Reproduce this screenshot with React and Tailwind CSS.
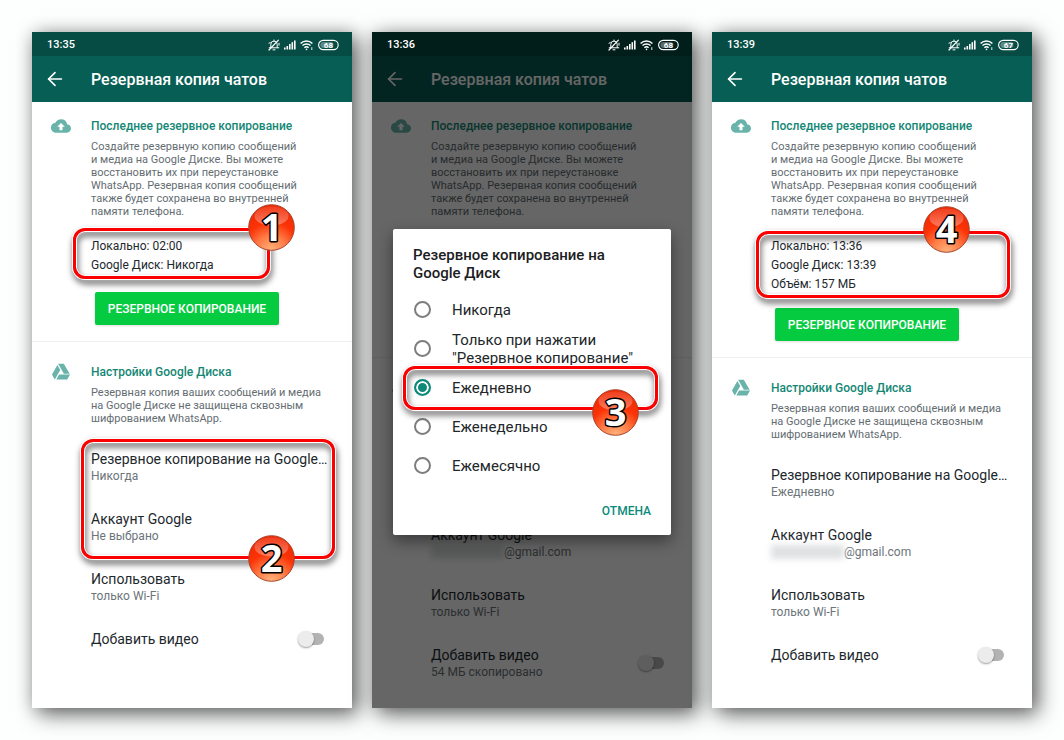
import { ArrowLeft } from 'lucide-react'

function StatusIcons({ battery }) {
  return (
    <div className="flex items-center gap-1">
      {/* Muted bell */}
      <svg width="12" height="12" viewBox="0 0 12 12" fill="none" stroke="currentColor" strokeLinecap="round">
        <path d="M2.8 8.5V5.3a3.2 3.2 0 0 1 6.4 0v3.2M1.2 8.8h9.6M5 10.8h2M6 1v.8M1 4.2l1.2-.6M11 4.2v2" />
        <path d="M1 11 10.4 1.2" strokeWidth="1.2" />
      </svg>
      <svg width="12" height="12" viewBox="0 0 12 12" fill="currentColor">
        <rect x="0" y="8.5" width="1.6" height="2" />
        <rect x="2.5" y="7" width="1.6" height="3.5" />
        <rect x="5" y="5" width="1.6" height="5.5" />
        <rect x="7.5" y="3.2" width="1.6" height="7.3" />
        <rect x="10" y="1.5" width="1.6" height="9" />
      </svg>
      <svg width="14" height="12" viewBox="0 0 14 12" fill="none" stroke="currentColor" strokeWidth="1.4">
        <path d="M.6 4.4a8.4 8.4 0 0 1 11.8 0M2.5 6.6a5.7 5.7 0 0 1 8 0M4.4 8.7a3 3 0 0 1 4.2 0" />
        <circle cx="6.5" cy="10.4" r="0.8" fill="currentColor" stroke="none" />
        <path d="M11.8 8.2v2.8" strokeWidth="0.9" />
      </svg>
      <svg width="21" height="12" viewBox="0 0 21 12">
        <rect x="0.6" y="1.4" width="19.6" height="9.2" rx="4.6" fill="none" stroke="currentColor" strokeWidth="1.1" />
        <rect x="2.4" y="3.1" width="13" height="5.8" rx="2.8" fill="currentColor" opacity="0.35" />
        <text x="10.4" y="8.9" textAnchor="middle" fontSize="8" fontWeight="700" fill="currentColor">
          {battery}
        </text>
      </svg>
    </div>
  )
}

function CloudIcon() {
  return (
    <svg width="20" height="20" viewBox="0 0 24 24" className="fill-[#69b3aa]">
      <path d="M19.35 10.04A7.49 7.49 0 0 0 12 4C9.11 4 6.6 5.64 5.35 8.04A5.994 5.994 0 0 0 0 14c0 3.31 2.69 6 6 6h13c2.76 0 5-2.24 5-5 0-2.64-2.05-4.78-4.65-4.96zM13.8 13v4h-3.6v-4H7.4L12 8.4l4.6 4.6h-2.8z" />
    </svg>
  )
}

function DriveIcon() {
  return (
    <svg width="20" height="20" viewBox="0 0 24 24" className="fill-[#69b3aa]">
      <path d="M7.71 3.5 1.15 15l3.43 6 6.55-11.5M9.73 15 6.3 21h13.12l3.43-6M22.28 14 15.42 2H8.58l6.85 12z" />
    </svg>
  )
}

function Badge({ n, className }) {
  return (
    <svg width="47" height="47" viewBox="0 0 47 47" className={`absolute overflow-visible ${className}`}>
      <defs>
        <radialGradient id={`body${n}`} cx="0.5" cy="1" r="0.95">
          <stop offset="0" stopColor="#ffb47c" />
          <stop offset="0.35" stopColor="#ff7a45" />
          <stop offset="0.65" stopColor="#fb3306" />
          <stop offset="1" stopColor="#ee2a04" />
        </radialGradient>
        <linearGradient id={`gloss${n}`} x1="0" y1="0" x2="0" y2="1">
          <stop offset="0" stopColor="#fff" stopOpacity="0.1" />
          <stop offset="1" stopColor="#fff" stopOpacity="0.35" />
        </linearGradient>
      </defs>
      <circle cx="23.5" cy="23.5" r="22.8" fill={`url(#body${n})`} stroke="#a8432c" strokeWidth="1" />
      <ellipse cx="23.5" cy="12" rx="17" ry="9.5" fill={`url(#gloss${n})`} />
      <text
        x="23.5"
        y="37"
        textAnchor="middle"
        fontSize="38"
        fontWeight="700"
        fill="#fff"
        stroke="#000"
        strokeWidth="3"
        strokeLinejoin="round"
        paintOrder="stroke"
        className="font-['Open_Sans',sans-serif]"
      >
        {n}
      </text>
    </svg>
  )
}

// Red frame with a numbered badge, laid over its relative parent
function Callout({ n, className, badgeClass }) {
  return (
    <div className={`pointer-events-none absolute z-10 ${className}`}>
      <div className="h-full rounded-xl border-3 border-[#fb0000] shadow-[0_0_0_1px_#fff,inset_0_0_0_1px_#fff] drop-shadow-[1px_4px_3px_rgba(0,0,0,0.65)]" />
      <Badge n={n} className={badgeClass} />
    </div>
  )
}

function Section({ icon, title, text, children }) {
  return (
    <section className="flex gap-5 pl-[19px]">
      <div className="-mt-0.5 w-5 shrink-0">{icon}</div>
      <div className="min-w-0 flex-1">
        <h2 className="text-[12px] leading-4 font-medium text-[#148775]">{title}</h2>
        <p className="mt-1.5 text-[11px] leading-[13px] whitespace-pre-line text-[#646d72]">{text}</p>
        {children}
      </div>
    </section>
  )
}

function Setting({ title, children }) {
  return (
    <div className="h-15 text-[#1d282d]">
      <h3 className="text-[14px] leading-[18px] whitespace-nowrap">{title}</h3>
      <p className="text-[12px] leading-4 text-[#6b7479]">{children}</p>
    </div>
  )
}

function Account({ account }) {
  if (!account) return 'Не выбрано'
  return (
    <span className="flex items-center">
      <span className="h-3.5 w-[73px] bg-[#dfe1e2] blur-[3px]" />
      {account}
    </span>
  )
}

function Phone({ time, battery, stats, statsCallout, schedule, account, rowsCallout, videoNote, dialog }) {
  return (
    <main className="relative flex flex-col bg-white shadow-[6px_6px_20px_rgba(0,0,0,0.6),0_0_16px_rgba(0,0,0,0.15)]">
      <div
        className={`relative flex h-6 items-center justify-between pt-0.5 pr-[13px] pl-[15px] text-[11px] font-medium text-white ${
          dialog ? 'z-10 bg-[#021e1b]' : 'bg-[#064c44]'
        }`}
      >
        <span>{time}</span>
        <StatusIcons battery={battery} />
      </div>
      <header className="flex h-[46px] items-center bg-[#075e54] pl-3 text-white">
        <button type="button" aria-label="Назад" className="w-[47px]">
          <ArrowLeft size={22} strokeWidth={1.8} />
        </button>
        <h1 className="pt-0.5 text-[16px] font-medium">Резервная копия чатов</h1>
      </header>

      <div className="border-b border-[#f0f0f0] pt-4 pb-4">
        <Section
          icon={<CloudIcon />}
          title="Последнее резервное копирование"
          text={
            'Создайте резервную копию сообщений\nи медиа на Google Диске. Вы можете\nвосстановить их при переустановке\nWhatsApp. Резервная копия сообщений\nтакже будет сохранена во внутренней\nпамяти телефона.'
          }
        >
          <div className="relative mt-[19px] min-h-[41px] text-[12px] leading-[19px] text-[#1d282d]">
            {stats.map((line) => (
              <p key={line}>{line}</p>
            ))}
            {statsCallout}
          </div>
          <button
            type="button"
            className="mt-3.5 ml-1 h-[33px] w-[184px] rounded-xs bg-[#04cb3f] text-[12px] font-medium whitespace-nowrap text-white shadow-sm"
          >
            РЕЗЕРВНОЕ КОПИРОВАНИЕ
          </button>
        </Section>
      </div>

      <div className="pt-[22px] pb-5">
        <Section
          icon={<DriveIcon />}
          title="Настройки Google Диска"
          text={'Резервная копия ваших сообщений и медиа\nна Google Диске не защищена сквозным\nшифрованием WhatsApp.'}
        >
          <div className="relative mt-[25px]">
            <Setting title="Резервное копирование на Google…">{schedule}</Setting>
            <Setting title="Аккаунт Google">
              <Account account={account} />
            </Setting>
            <Setting title="Использовать">только Wi-Fi</Setting>
            {rowsCallout}
          </div>
          <label className="flex items-center justify-between pr-7 text-[#1d282d]">
            <span>
              <span className="block text-[14px] leading-[18px]">Добавить видео</span>
              {videoNote && <span className="block text-[12px] leading-4 text-[#6b7479]">{videoNote}</span>}
            </span>
            <input
              type="checkbox"
              role="switch"
              className="relative h-3 w-[22px] appearance-none rounded-full bg-[#b3b3b3] before:absolute before:-top-0.5 before:-left-1 before:size-4 before:rounded-full before:bg-[#ececec] before:shadow-[0_1px_2px_rgba(0,0,0,0.4)]"
            />
          </label>
        </Section>
      </div>
      {dialog}
    </main>
  )
}

const options = [
  'Никогда',
  'Только при нажатии\n"Резервное копирование"',
  'Ежедневно',
  'Еженедельно',
  'Ежемесячно',
]

function ScheduleDialog() {
  return (
    <div className="absolute inset-0 flex items-center justify-center bg-black/60 px-[21px] pt-6">
      <div role="dialog" className="w-full rounded-xs bg-white px-5 pt-[17px] pb-3.5 shadow-[0_6px_16px_rgba(0,0,0,0.45)]">
        <h2 className="text-[15px] leading-[18px] font-medium whitespace-pre-line text-[#1c2022]">
          {'Резервное копирование на\nGoogle Диск'}
        </h2>
        <div className="mt-2">
          {options.map((option) => (
            <label key={option} className="relative flex h-[39px] items-center gap-[21px] text-[15px] leading-[18px] text-[#22272a]">
              <input
                type="radio"
                name="schedule"
                defaultChecked={option === 'Ежедневно'}
                className="ml-px size-[17px] shrink-0 appearance-none rounded-full border-2 border-[#7d7d7d] checked:border-[#0b8a7a] checked:bg-[#0b8a7a] checked:shadow-[inset_0_0_0_2px_#fff]"
              />
              <span className="whitespace-pre">{option}</span>
              {option === 'Ежедневно' && (
                <Callout n={3} className="-top-0.5 -right-[7px] -left-2.5 h-11" badgeClass="right-[19px] -bottom-[26px]" />
              )}
            </label>
          ))}
        </div>
        <div className="mt-4 flex justify-end">
          <button type="button" className="text-[12px] leading-5 font-medium text-[#0b8a7a]">
            ОТМЕНА
          </button>
        </div>
      </div>
    </div>
  )
}

export default function App() {
  return (
    <div className="grid min-h-screen grid-cols-3 gap-5 bg-[#fdfefe] p-8 font-[Roboto,sans-serif]">
      <Phone
        time="13:35"
        battery={68}
        stats={['Локально: 02:00', 'Google Диск: Никогда']}
        statsCallout={<Callout n={1} className="-top-[9px] -left-[18px] h-[51px] w-[197px]" badgeClass="-top-6 -right-[25px]" />}
        schedule="Никогда"
        rowsCallout={<Callout n={2} className="-top-[11px] -left-2.5 h-[120px] w-[254px]" badgeClass="right-10 -bottom-[23px]" />}
      />
      <Phone
        time="13:36"
        battery={68}
        stats={['Локально: 13:36', 'Google Диск: 13:39', 'Объём: 157 МБ']}
        schedule="Ежедневно"
        account="@gmail.com"
        videoNote="54 МБ скопировано"
        dialog={<ScheduleDialog />}
      />
      <Phone
        time="13:39"
        battery={67}
        stats={['Локально: 13:36', 'Google Диск: 13:39', 'Объём: 157 МБ']}
        statsCallout={<Callout n={4} className="-top-1.5 -left-[15px] h-[67px] w-[254px]" badgeClass="-top-[25px] right-10" />}
        schedule="Ежедневно"
        account="@gmail.com"
      />
    </div>
  )
}
